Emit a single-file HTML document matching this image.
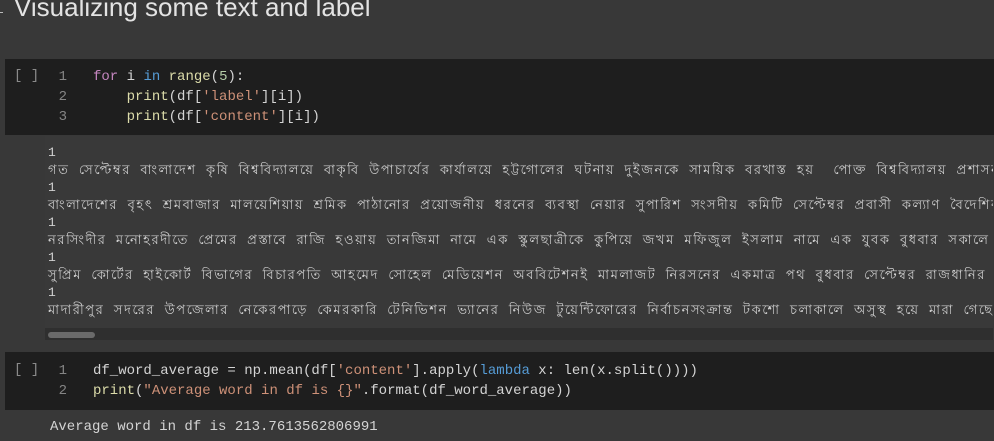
<!DOCTYPE html>
<html><head><meta charset="utf-8"><style>
body{margin:0;width:994px;height:441px;background:#383838;overflow:hidden;position:relative;font-family:"Liberation Mono",monospace;}
.h{position:absolute;left:14px;top:-8px;font:26px "Liberation Sans",sans-serif;color:#e3e3e3;white-space:nowrap}
.dash{position:absolute;left:0;top:12px;width:3px;height:1px;background:#bbb}
.cell{position:absolute;left:5px;right:0;background:#1e1e1e}
.br{position:absolute;left:9px;color:#8a8a8a;font-size:14px}
.code{position:absolute;left:0;font-size:14px;line-height:20px;white-space:pre;color:#d4d4d4}
.ln{display:inline-block;width:62px;text-align:right;color:#858585;margin-right:26px}
.k{color:#c586c0}.b{color:#569cd6}.f{color:#dcdcaa}.n{color:#b5cea8}.s{color:#ce9178}
.out{position:absolute;left:45px;right:1px;top:136px;height:192px;background:#393939;overflow:hidden}
.ot{position:absolute;left:3px;top:8px;font:13px/17.5px "Liberation Mono","Noto Sans CJK SC",monospace;color:#d0d0d0;white-space:pre;letter-spacing:1.6px}
.track{position:absolute;left:45px;right:1px;top:328px;height:12px;background:#2f2f2f}
.thumb{position:absolute;left:48px;top:332px;width:47px;height:6px;border-radius:3px;background:#6a6a6a}
.o2{position:absolute;left:50px;top:419px;font-size:14px;color:#d4d4d4;white-space:pre}
</style></head><body>
<div class="dash"></div>
<div class="h">Visualizing some text and label</div>
<div class="cell" style="top:59px;height:76px">
<div class="br" style="top:9px">[ ]</div>
<div class="code" style="top:8px"><span class="ln">1</span><span class="k">for</span> i <span class="b">in</span> <span class="f">range</span>(<span class="n">5</span>):
<span class="ln">2</span>    <span class="f">print</span>(df[<span class="s">'label'</span>][i])
<span class="ln">3</span>    <span class="f">print</span>(df[<span class="s">'content'</span>][i])</div>
</div>
<div class="out"><div class="ot">1
গত সেপ্টেম্বর বাংলাদেশ কৃষি বিশ্ববিদ্যালয়ে বাকৃবি উপাচার্যের কার্যালয়ে হট্টগোলের ঘটনায় দুইজনকে সাময়িক বরখাস্ত হয়  পোক্ত বিশ্ববিদ্যালয় প্রশাসন
1
বাংলাদেশের বৃহৎ শ্রমবাজার মালয়েশিয়ায় শ্রমিক পাঠানোর প্রয়োজনীয় ধরনের ব্যবস্থা নেয়ার সুপারিশ সংসদীয় কমিটি সেপ্টেম্বর প্রবাসী কল্যাণ বৈদেশিক কর্ম
1
নরসিংদীর মনোহরদীতে প্রেমের প্রস্তাবে রাজি হওয়ায় তানজিমা নামে এক স্কুলছাত্রীকে কুপিয়ে জখম মফিজুল ইসলাম নামে এক যুবক বুধবার সকালে উপজেলার
1
সুপ্রিম কোর্টের হাইকোর্ট বিভাগের বিচারপতি আহমেদ সোহেল মেডিয়েশন অববিটেশনই মামলাজট নিরসনের একমাত্র পথ বুধবার সেপ্টেম্বর রাজধানির এক হোটেল
1
মাদারীপুর সদরের উপজেলার নেকেরপাড়ে কেমরকারি টেনিভিশন ভ্যানের নিউজ টুয়েন্টিফোরের নির্বাচনসংক্রান্ত টকশো চলাকালে অসুস্থ হয়ে মারা গেছেন জা</div></div>
<div class="track"></div><div class="thumb"></div>
<div class="cell" style="top:352px;height:58px">
<div class="br" style="top:10px">[ ]</div>
<div class="code" style="top:9px"><span class="ln">1</span>df_word_average = np.mean(df[<span class="s">'content'</span>].apply(<span class="b">lambda</span> x: len(x.split())))
<span class="ln">2</span><span class="f">print</span>(<span class="s">"Average word in df is {}"</span>.format(df_word_average))</div>
</div>
<div class="o2">Average word in df is 213.7613562806991</div>
</body></html>
